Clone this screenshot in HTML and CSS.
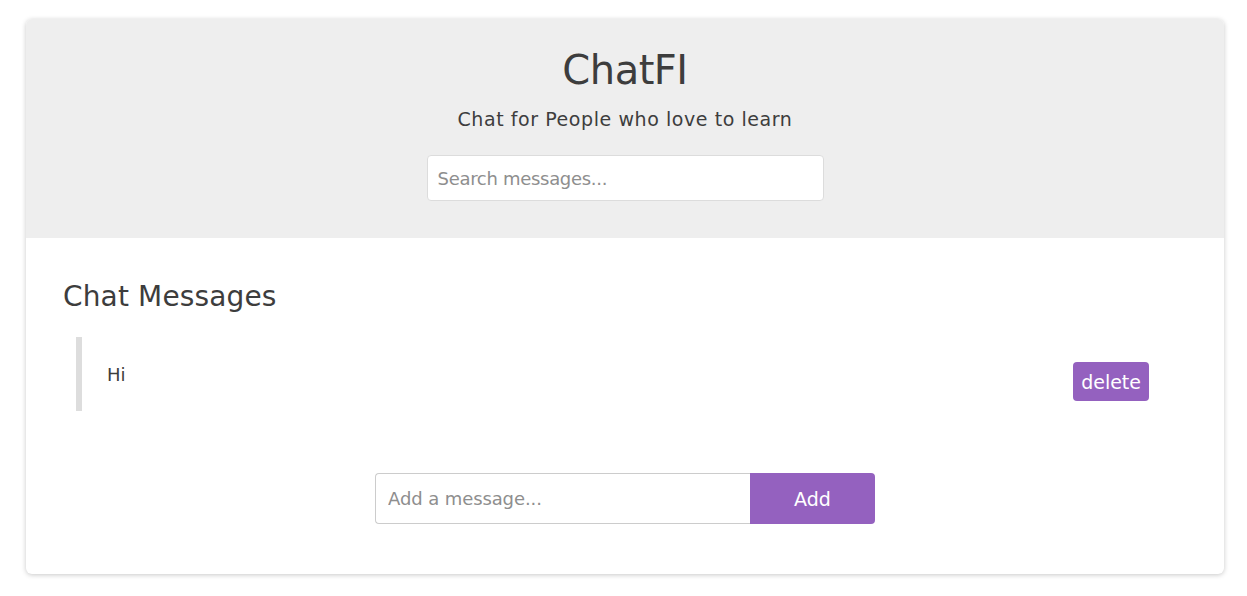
FILE: index.html
```html
<!DOCTYPE html>
<html>
<head>
<meta charset="utf-8">
<link rel="stylesheet" href="styles.css">
</head>
<body>
<div class="card">
  <header class="hero">
    <h1 class="title">ChatFI</h1>
    <p class="tagline">Chat for People who love to learn</p>
    <input class="search" type="text" placeholder="Search messages...">
  </header>
  <main class="content">
    <h2 class="section-title">Chat Messages</h2>
    <ul class="messages">
      <li class="message">
        <span class="message-text">Hi</span>
        <button class="delete-btn">delete</button>
      </li>
    </ul>
    <form class="add-form">
      <input class="add-input" type="text" placeholder="Add a message...">
      <button class="add-btn" type="button">Add</button>
    </form>
  </main>
</div>
</body>
</html>
```

FILE: styles.css
```css
* { box-sizing: border-box; }
html, body { margin: 0; padding: 0; background: #fff; }
body {
  font-family: "DejaVu Sans", Verdana, sans-serif;
  color: #3d3d3d;
  padding: 19px 23px 22px 26px;
}
.card {
  border-radius: 6px;
  box-shadow: 0 1px 5px rgba(0,0,0,0.22);
  overflow: hidden;
  background: #fff;
}
.hero {
  background: #eeeeee;
  height: 219px;
  display: flex;
  flex-direction: column;
  align-items: center;
  padding-top: 27px;
}
.title {
  margin: 0;
  font-size: 40px;
  font-weight: normal;
  line-height: 48px;
  letter-spacing: -0.5px;
}
.tagline {
  margin: 13px 0 0;
  font-size: 19px;
  line-height: 24px;
  letter-spacing: 0.57px;
}
.search {
  margin-top: 24px;
  width: 397px;
  height: 46px;
  border: 1px solid #dcdcdc;
  border-radius: 4px;
  background: #fff;
  padding: 0 10px;
  font-family: inherit;
  font-size: 18px;
  letter-spacing: -0.3px;
  color: #333;
  outline: none;
}
.search::placeholder, .add-input::placeholder { color: #8e8e8e; }
.content {
  padding: 42px 37px 50px;
}
.section-title {
  margin: 0;
  font-size: 28px;
  font-weight: normal;
  line-height: 34px;
  letter-spacing: 0.15px;
}
.messages {
  list-style: none;
  margin: 23px 13px 0;
  padding: 0;
}
.message {
  display: flex;
  justify-content: space-between;
  align-items: flex-start;
  border-left: 6px solid #dddddd;
  padding: 25px 25px 10px 25px;
}
.message-text {
  font-size: 18px;
  line-height: 26px;
}
.delete-btn {
  background: #9461bf;
  color: #fff;
  border: none;
  border-radius: 4px;
  height: 39px;
  padding: 0 8px;
  font-family: inherit;
  font-size: 19px;
  margin-top: 0;
}
.add-form {
  margin-top: 62px;
  display: flex;
  justify-content: center;
}
.add-input {
  width: 375px;
  height: 51px;
  border: 1px solid #cccccc;
  border-right: none;
  border-radius: 4px 0 0 4px;
  padding: 0 12px;
  font-family: inherit;
  font-size: 18px;
  letter-spacing: -0.1px;
  outline: none;
}
.add-btn {
  width: 125px;
  height: 51px;
  border: none;
  background: #9461bf;
  color: #fff;
  border-radius: 0 4px 4px 0;
  font-family: inherit;
  font-size: 19px;
}
```
